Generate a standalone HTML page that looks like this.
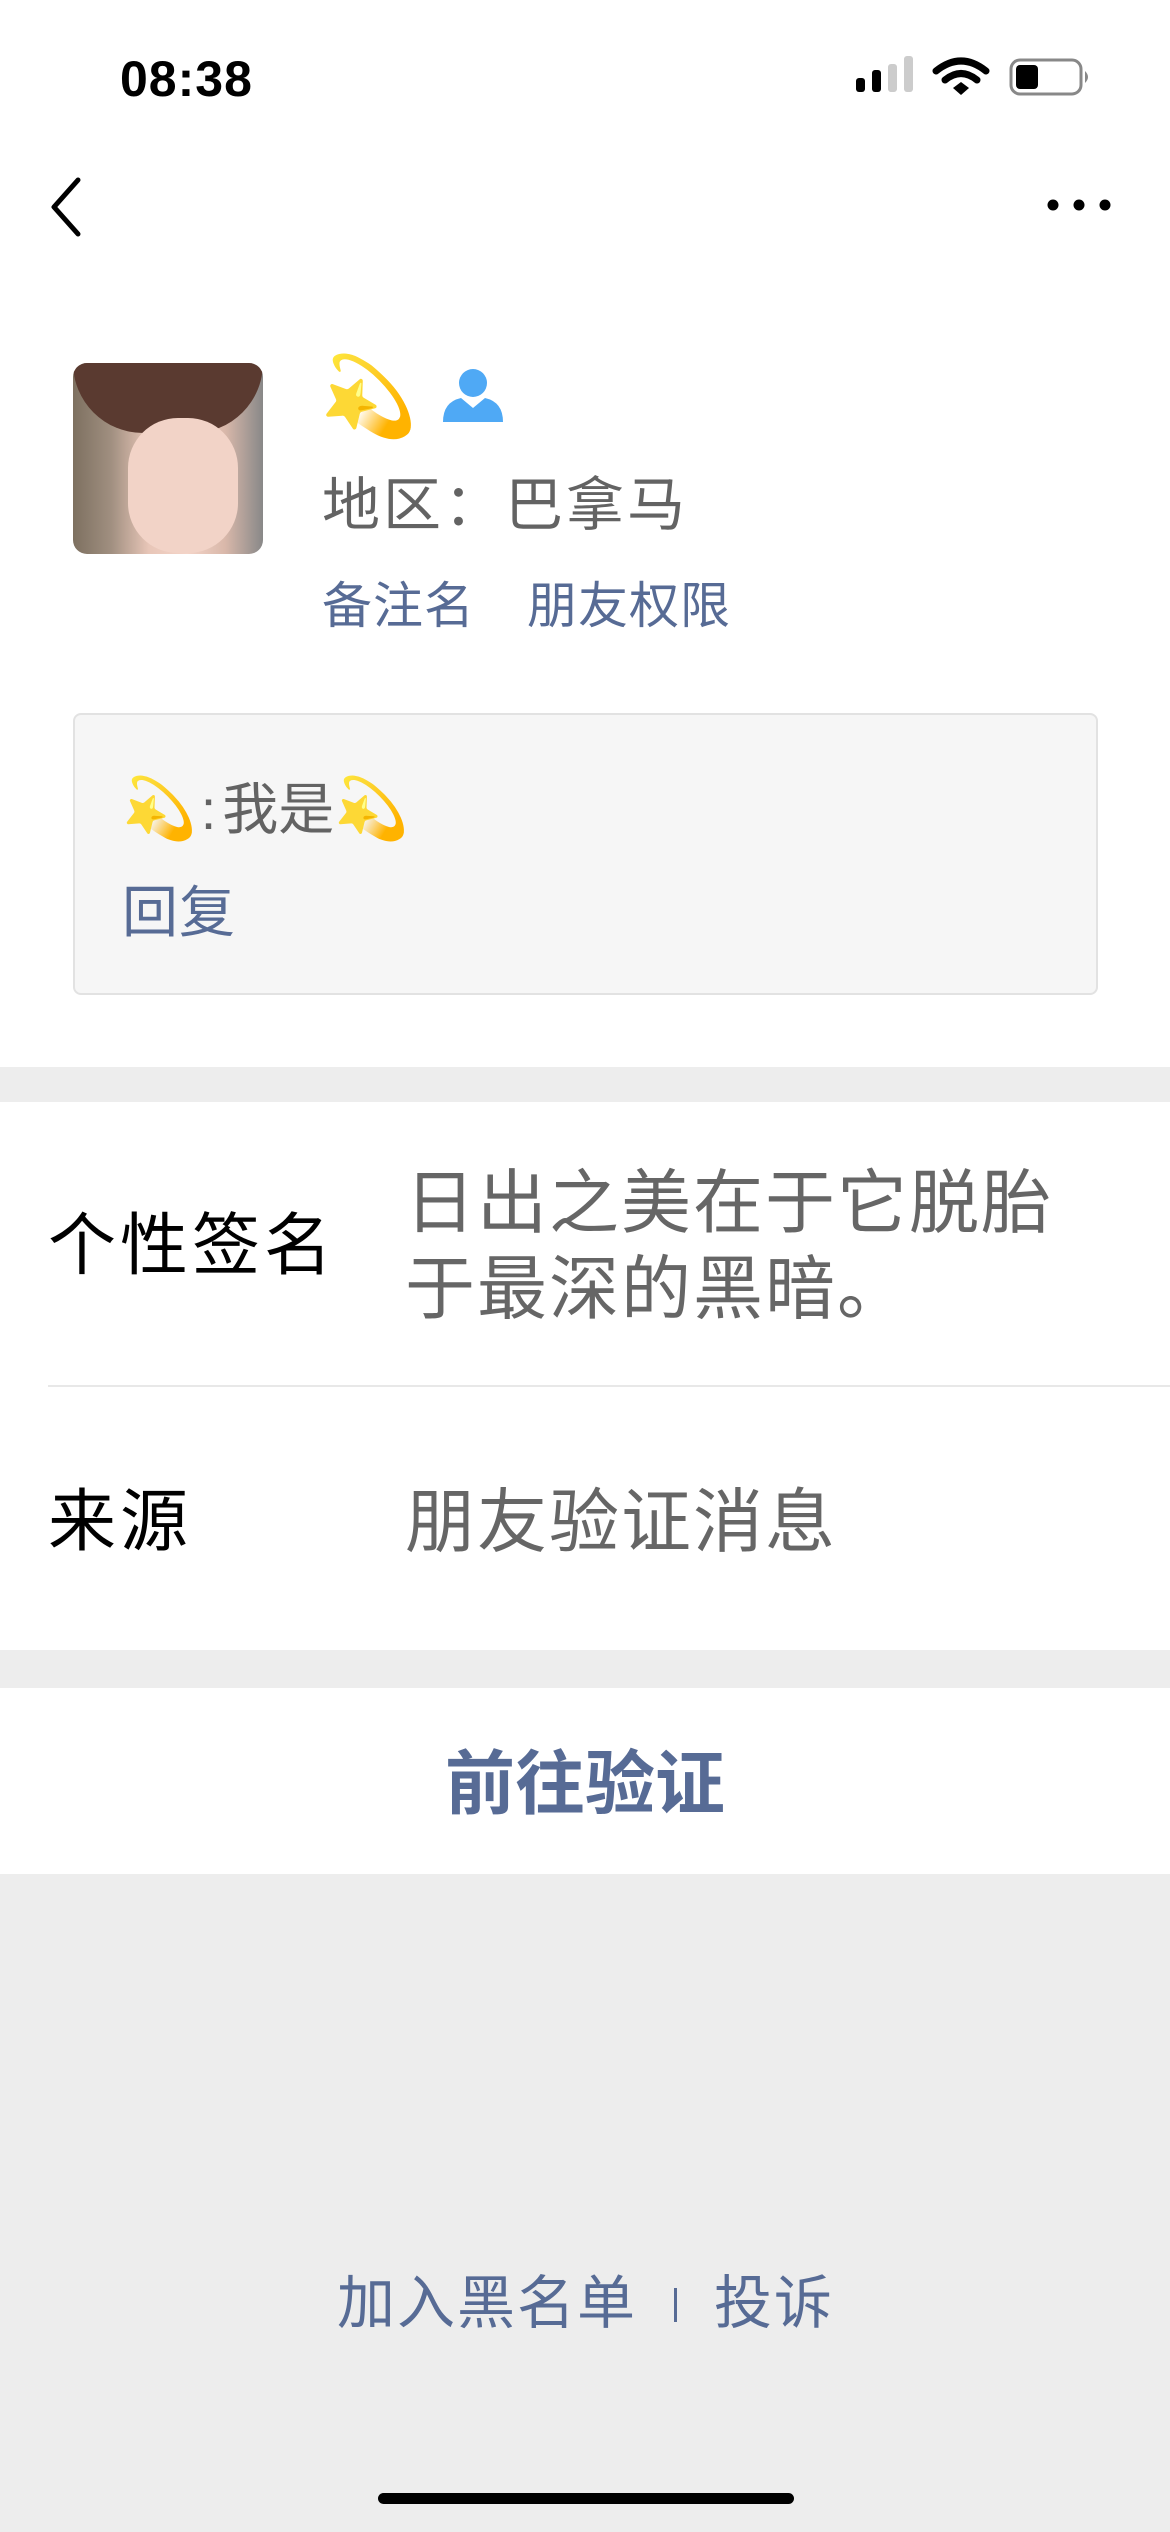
<!DOCTYPE html>
<html><head><meta charset="utf-8"><style>
*{margin:0;padding:0;box-sizing:border-box}
body{width:1170px;height:2532px;background:#ededed;font-family:"Liberation Sans","Noto Sans CJK SC",sans-serif;position:relative;overflow:hidden}
.abs{position:absolute;white-space:nowrap}
.top{position:absolute;left:0;top:0;width:1170px;height:1067px;background:#fff}
.sec{position:absolute;left:0;width:1170px;background:#fff}
</style></head><body>
<div class="top"></div>
<div class="abs" style="left:120px;top:50px;font-size:50px;font-weight:bold;color:#000;letter-spacing:1px">08:38</div>
<svg class="abs" style="left:850px;top:55px" width="250" height="45">
<rect x="6" y="23" width="9" height="14" rx="3" fill="#000"/>
<rect x="22" y="15" width="9" height="22" rx="3" fill="#000"/>
<rect x="38" y="9" width="9" height="28" rx="3" fill="#ccc"/>
<rect x="54" y="1" width="9" height="36" rx="3" fill="#ccc"/>
<path d="M86 16 Q111 -4 136 16" stroke="#000" stroke-width="7" fill="none" stroke-linecap="round"/>
<path d="M95 25 Q111 12 127 25" stroke="#000" stroke-width="7" fill="none" stroke-linecap="round"/>
<path d="M103 33 L111 27 L119 33 L111 40 Z" fill="#000"/>
<rect x="161" y="5" width="70" height="34" rx="9" fill="none" stroke="#888" stroke-width="3"/>
<rect x="166" y="10" width="22" height="24" rx="4" fill="#000"/>
<path d="M235 16 Q241 22 235 28 Z" fill="#888"/>
</svg>
<svg class="abs" style="left:48px;top:176px" width="40" height="62"><path d="M30 4 L6 31 L30 58" stroke="#000" stroke-width="5" fill="none" stroke-linecap="round" stroke-linejoin="round"/></svg>
<svg class="abs" style="left:1045px;top:197px" width="70" height="16"><circle cx="8" cy="8" r="5.5" fill="#000"/><circle cx="34" cy="8" r="5.5" fill="#000"/><circle cx="60" cy="8" r="5.5" fill="#000"/></svg>
<div class="abs" style="left:73px;top:363px;width:190px;height:191px;border-radius:14px;overflow:hidden;background:linear-gradient(90deg,#7d7060 0%,#a08f80 20%,#e8c6b8 40%,#f4d4c8 60%,#d9b8aa 80%,#888 100%)">
<div style="position:absolute;left:0;top:0;width:190px;height:70px;background:#5a3a30;border-radius:0 0 80px 80px"></div>
<div style="position:absolute;left:55px;top:55px;width:110px;height:135px;background:#f2d3c7;border-radius:50px"></div>
</div>
<div class="abs" style="left:320px;top:348px;font-size:78px;line-height:96px">💫</div>
<svg class="abs" style="left:441px;top:368px" width="64" height="56"><circle cx="32" cy="15" r="14" fill="#4fa9f5"/><path d="M2 54 Q2 34 20 30 L32 40 L44 30 Q62 34 62 54 Z" fill="#4fa9f5"/></svg>
<div class="abs" style="left:322px;top:468px;font-size:58px;line-height:76px;color:#636363;letter-spacing:3px">地区：巴拿马</div>
<div class="abs" style="left:322px;top:573px;font-size:50px;line-height:66px;color:#576b95;letter-spacing:1px">备注名</div>
<div class="abs" style="left:527px;top:573px;font-size:50px;line-height:66px;color:#576b95;letter-spacing:1px">朋友权限</div>
<div class="abs" style="left:73px;top:713px;width:1025px;height:282px;background:#f6f6f6;border:2px solid #e2e2e2;border-radius:8px"></div>
<div class="abs" style="left:122px;top:772px;font-size:56px;line-height:74px;color:#636363"><span style="font-size:60px">💫</span><span style="margin:0 6px 0 4px">:</span>我是<span style="font-size:60px">💫</span></div>
<div class="abs" style="left:122px;top:876px;font-size:56px;line-height:74px;color:#576b95;letter-spacing:1px">回复</div>
<div class="sec" style="top:1102px;height:548px"></div>
<div class="abs" style="left:48px;top:1204px;font-size:68px;line-height:84px;color:#000;letter-spacing:4px">个性签名</div>
<div class="abs" style="left:405px;top:1160px;font-size:70px;line-height:86px;color:#666;white-space:normal;width:720px;letter-spacing:2px">日出之美在于它脱胎<br>于最深的黑暗。</div>
<div class="abs" style="left:48px;top:1385px;width:1122px;height:2px;background:#e8e8e8"></div>
<div class="abs" style="left:48px;top:1480px;font-size:68px;line-height:84px;color:#000;letter-spacing:4px">来源</div>
<div class="abs" style="left:405px;top:1479px;font-size:70px;line-height:86px;color:#666;letter-spacing:2px">朋友验证消息</div>
<div class="sec" style="top:1688px;height:186px"></div>
<div class="abs" style="left:0;width:1170px;text-align:center;top:1742px;font-size:70px;line-height:84px;font-weight:bold;color:#576b95">前往验证</div>
<div class="abs" style="left:337px;top:2266px;font-size:58px;line-height:76px;color:#576b95;letter-spacing:2px">加入黑名单</div>
<div class="abs" style="left:674px;top:2288px;width:3px;height:34px;background:#576b95"></div>
<div class="abs" style="left:714px;top:2266px;font-size:58px;line-height:76px;color:#576b95;letter-spacing:2px">投诉</div>
<div class="abs" style="left:378px;top:2493px;width:416px;height:11px;border-radius:6px;background:#000"></div>
</body></html>
